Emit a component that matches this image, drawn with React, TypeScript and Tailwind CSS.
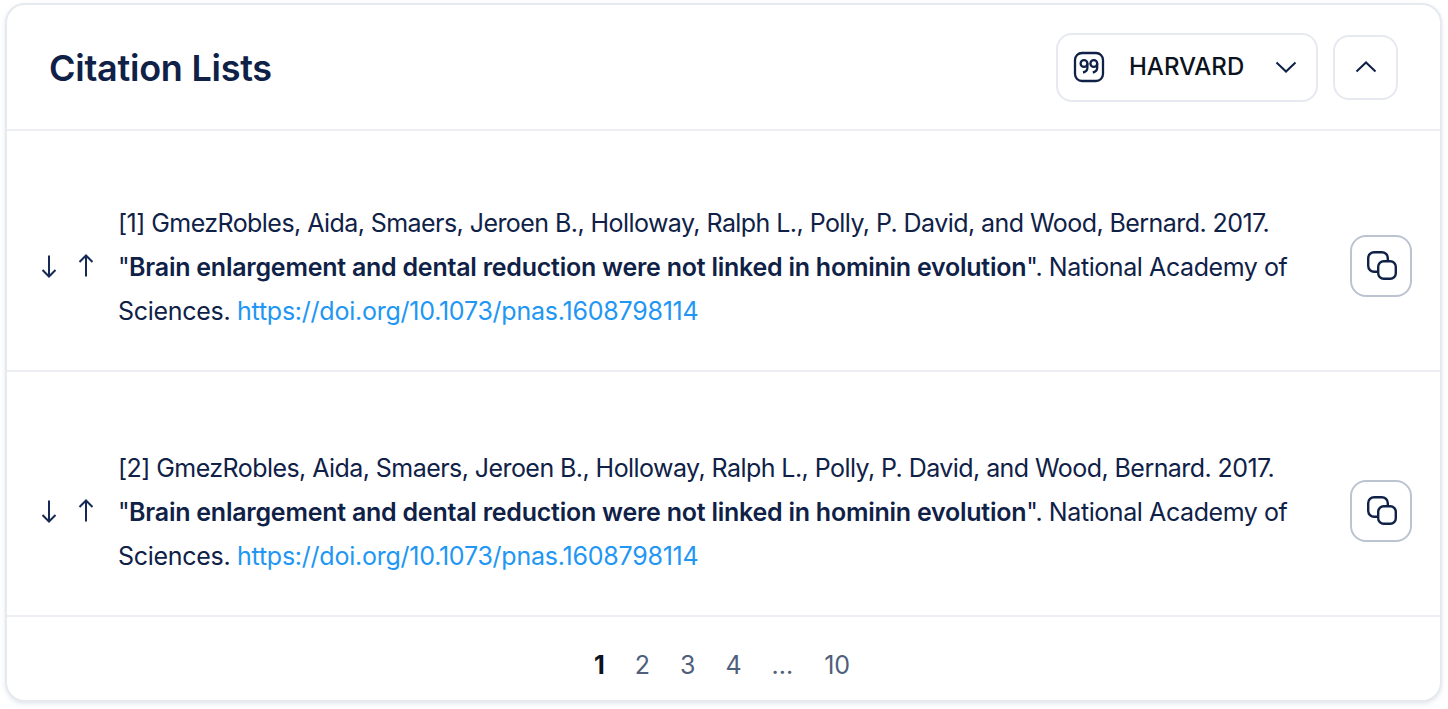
import React from "react";

function CopyIcon() {
  return (
    <svg width="32" height="32" viewBox="0 0 32 32" fill="none" stroke="#0f2147" strokeWidth="2.4">
      <rect x="3.200" y="2.200" width="19.600" height="19.600" rx="6" />
      <rect x="13.200" y="11.200" width="17.600" height="17.600" rx="5.500" fill="#fff" />
    </svg>
  );
}

function Row({ n, cls }: { n: number; cls: string }) {
  return (
    <div className={"flex items-center border-b-2 border-[#eceef3] pl-[32px] pr-[28px] " + cls}>
      <div className="flex items-center w-[79px] gap-[17px] shrink-0 text-[#142a55]">
        <svg width="20" height="26" viewBox="0 0 20 26" fill="none" stroke="currentColor" strokeWidth="2">
          <path d="M10 2.500V23.500M3.500 17 10 23.500 16.500 17" />
        </svg>
        <svg width="20" height="26" viewBox="0 0 20 26" fill="none" stroke="currentColor" strokeWidth="2">
          <path d="M10 23.500V2.500M3.500 9 10 2.500 16.500 9" />
        </svg>
      </div>
      <p className="w-[1200px] shrink-0 mt-[2px] text-[25px] leading-[44px] tracking-[-0.56px] text-[#0f2147] whitespace-nowrap">
        [{n}] GmezRobles, Aida, Smaers, Jeroen B., Holloway, Ralph L., Polly, P. David, and Wood, Bernard. 2017.
        <br />
        "<span className="font-semibold tracking-[-0.24px]">Brain enlargement and dental reduction were not linked in hominin evolution</span>
        <span className="tracking-[-0.42px]">". National Academy of</span>
        <br />
        <span className="tracking-[-0.3px]">Sciences. </span>
        <a className="text-[#2196f3] tracking-[-0.24px]">https://doi.org/10.1073/pnas.1608798114</a>
      </p>
      <button className="ml-auto w-[62px] h-[62px] rounded-[16px] border-2 border-[#bcc3d1] flex items-center justify-center bg-white">
        <CopyIcon />
      </button>
    </div>
  );
}

export default function App() {
  return (
    <div className="w-[1448px] h-[709px] bg-white pt-[3px] pl-[5px] font-['Inter','Liberation_Sans',sans-serif]">
      <div className="w-[1437px] h-[699px] rounded-[20px] border-2 border-[#e6e9ef] bg-white shadow-[0_2px_4px_rgba(200,208,222,0.5)] flex flex-col overflow-hidden">
        <div className="h-[126px] shrink-0 border-b-2 border-[#eceef3] flex items-center pl-[42px] pr-[42px]">
          <h1 className="mt-[2px] text-[36px] font-semibold tracking-[-0.25px] text-[#0f2147]">Citation Lists</h1>
          <div className="ml-auto flex items-center gap-[15px]">
            <div className="w-[262px] h-[69px] rounded-[16px] border-2 border-[#e6e9ef] flex items-center pl-[15px] pr-[18px]">
              <svg width="32" height="32" viewBox="0 0 32 32" fill="none" stroke="#0f2147" strokeWidth="2.300">
                <rect x="2" y="2" width="28" height="28" rx="7" />
                <circle cx="11" cy="12.500" r="3.400" />
                <path d="M14.400 12.500V16.500C14.400 19 12.500 21 10 21.500" />
                <circle cx="20.800" cy="12.500" r="3.400" />
                <path d="M24.200 12.500V16.500C24.200 19 22.300 21 19.800 21.500" />
              </svg>
              <span className="ml-[24px] text-[24px] font-medium text-[#0b1220]">HARVARD</span>
              <svg className="ml-auto" width="24" height="24" viewBox="0 0 24 24" fill="none" stroke="#0f2147" strokeWidth="2">
                <path d="M2.500 7.500 12 16.500l9.500-9" />
              </svg>
            </div>
            <button className="w-[65px] h-[65px] rounded-[16px] border-2 border-[#e6e9ef] flex items-center justify-center">
              <svg width="24" height="24" viewBox="0 0 24 24" fill="none" stroke="#0f2147" strokeWidth="2">
                <path d="M2.500 16.500 12 7.500l9.500 9" />
              </svg>
            </button>
          </div>
        </div>
        <Row n={1} cls="h-[241px] pt-[31px]" />
        <Row n={2} cls="h-[245px] pt-[35px]" />
        <div className="flex-1 flex items-center justify-center text-[25px] text-[#4f5f7c] gap-[30px] pt-[14px] pr-[3px]">
          <span className="font-bold text-[#0b1220]">1</span>
          <span>2</span>
          <span>3</span>
          <span>4</span>
          <span>...</span>
          <span className="ml-[1px]">10</span>
        </div>
      </div>
    </div>
  );
}
